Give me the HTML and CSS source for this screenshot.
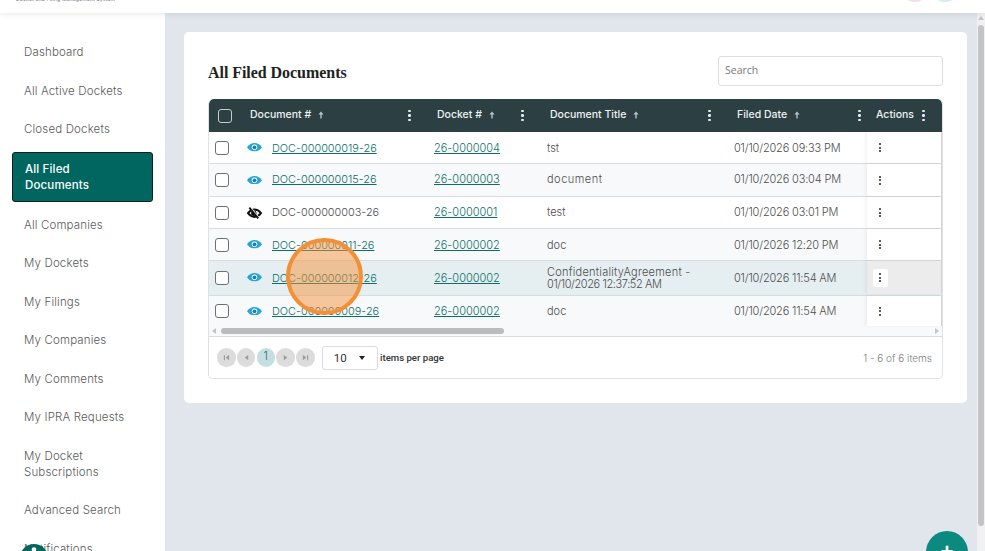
FILE: index.html
```html
<!DOCTYPE html>
<html lang="en">
<head>
<meta charset="utf-8">
<title>All Filed Documents</title>
<link rel="stylesheet" href="styles.css">
</head>
<body>
<svg class="defs" width="0" height="0" aria-hidden="true">
  <symbol id="eye" viewBox="0 0 16 9">
    <path d="M0 4.500C2.400 1.300 5 0 8 0s5.600 1.300 8 4.500C13.600 7.700 11 9 8 9S2.400 7.700 0 4.500z" fill="#25a4d8"/>
    <circle cx="8" cy="4.500" r="2.900" fill="#fff"/>
    <circle cx="8" cy="4.500" r="2" fill="#1b7ea9"/>
  </symbol>
  <symbol id="eye-off" viewBox="0 0 15 12">
    <path d="M1 6.200C2.900 3.600 5 2.500 7.500 2.500S12.100 3.600 14 6.200C12.100 8.800 10 9.900 7.500 9.900S2.900 8.800 1 6.200z" fill="none" stroke="#111" stroke-width="2"/>
    <circle cx="6.800" cy="6.200" r="2.700" fill="#111"/>
    <path d="M3.300 .3l9 10.800" stroke="#fff" stroke-width="1.300"/>
    <path d="M2.300 .6l9 10.800" stroke="#111" stroke-width="1.800"/>
  </symbol>
  <symbol id="up" viewBox="0 0 6 8">
    <path d="M3 .5L5.600 3.500H3.700V7.500H2.300V3.500H.4z"/>
  </symbol>
</svg>
<div class="app">
  <header class="topbar">
    <div class="tagline">Docket and Filing Management System</div>
    <div class="avatars"><span class="av av-pink"></span><span class="av av-teal"></span></div>
  </header>
  <div class="main-row">
    <nav class="sidebar">
      <a class="nav-item">Dashboard</a>
      <a class="nav-item">All Active Dockets</a>
      <a class="nav-item">Closed Dockets</a>
      <a class="nav-item active">All Filed<br>Documents</a>
      <a class="nav-item">All Companies</a>
      <a class="nav-item">My Dockets</a>
      <a class="nav-item">My Filings</a>
      <a class="nav-item">My Companies</a>
      <a class="nav-item">My Comments</a>
      <a class="nav-item">My IPRA Requests</a>
      <a class="nav-item">My Docket<br>Subscriptions</a>
      <a class="nav-item">Advanced Search</a>
      <a class="nav-item">Notifications</a>
    </nav>
    <main class="content">
      <section class="card">
        <div class="card-head">
          <h1>All Filed Documents</h1>
          <input class="search" placeholder="Search">
        </div>
        <div class="grid">
          <div class="row head">
            <div class="c c-check"><span class="cb cb-h"></span></div>
            <div class="c c-doc"><span class="th">Document # <svg class="up"><use href="#up"/></svg></span><span class="kebab"><b></b><b></b><b></b></span></div>
            <div class="c c-dkt"><span class="th">Docket # <svg class="up"><use href="#up"/></svg></span><span class="kebab"><b></b><b></b><b></b></span></div>
            <div class="c c-title"><span class="th">Document Title <svg class="up"><use href="#up"/></svg></span><span class="kebab"><b></b><b></b><b></b></span></div>
            <div class="c c-date"><span class="th">Filed Date <svg class="up"><use href="#up"/></svg></span><span class="kebab"><b></b><b></b><b></b></span></div>
            <div class="c c-act"><span class="th">Actions</span><span class="kebab"><b></b><b></b><b></b></span></div>
          </div>
          <div class="row">
            <div class="c c-check"><span class="cb"></span></div>
            <div class="c c-doc"><svg class="eye"><use href="#eye"/></svg><a class="link docid">DOC-000000019-26</a></div>
            <div class="c c-dkt"><a class="link">26-0000004</a></div>
            <div class="c c-title">tst</div>
            <div class="c c-date">01/10/2026 09:33 PM</div>
            <div class="c c-act"><span class="kebab dark"><b></b><b></b><b></b></span></div>
          </div>
          <div class="row alt tall nudge">
            <div class="c c-check"><span class="cb"></span></div>
            <div class="c c-doc"><svg class="eye"><use href="#eye"/></svg><a class="link docid">DOC-000000015-26</a></div>
            <div class="c c-dkt"><a class="link">26-0000003</a></div>
            <div class="c c-title wide">document</div>
            <div class="c c-date">01/10/2026 03:04 PM</div>
            <div class="c c-act"><span class="kebab dark"><b></b><b></b><b></b></span></div>
          </div>
          <div class="row nudge">
            <div class="c c-check"><span class="cb"></span></div>
            <div class="c c-doc"><svg class="eye eye-off"><use href="#eye-off"/></svg><span class="plain docid">DOC-000000003-26</span></div>
            <div class="c c-dkt"><a class="link">26-0000001</a></div>
            <div class="c c-title">test</div>
            <div class="c c-date">01/10/2026 03:01 PM</div>
            <div class="c c-act"><span class="kebab dark"><b></b><b></b><b></b></span></div>
          </div>
          <div class="row alt">
            <div class="c c-check"><span class="cb"></span></div>
            <div class="c c-doc"><svg class="eye"><use href="#eye"/></svg><a class="link docid">DOC-000000011-26</a></div>
            <div class="c c-dkt"><a class="link">26-0000002</a></div>
            <div class="c c-title">doc</div>
            <div class="c c-date">01/10/2026 12:20 PM</div>
            <div class="c c-act"><span class="kebab dark"><b></b><b></b><b></b></span></div>
          </div>
          <div class="row hover">
            <div class="c c-check"><span class="cb"></span></div>
            <div class="c c-doc"><svg class="eye"><use href="#eye"/></svg><a class="link docid">DOC-000000012-26</a></div>
            <div class="c c-dkt"><a class="link">26-0000002</a></div>
            <div class="c c-title two"><span>ConfidentialityAgreement -<br><span class="tight">01/10/2026 12:37:52 AM</span></span></div>
            <div class="c c-date">01/10/2026 11:54 AM</div>
            <div class="c c-act"><span class="kebab dark boxed"><b></b><b></b><b></b></span></div>
          </div>
          <div class="row alt last">
            <div class="c c-check"><span class="cb"></span></div>
            <div class="c c-doc"><svg class="eye"><use href="#eye"/></svg><a class="link docid">DOC-000000009-26</a></div>
            <div class="c c-dkt"><a class="link">26-0000002</a></div>
            <div class="c c-title">doc</div>
            <div class="c c-date">01/10/2026 11:54 AM</div>
            <div class="c c-act"><span class="kebab dark"><b></b><b></b><b></b></span></div>
          </div>
          <div class="hscroll">
            <span class="arr arr-l"></span>
            <span class="hthumb"></span>
            <span class="arr arr-r"></span>
          </div>
          <div class="pager">
            <span class="pg"><svg viewBox="0 0 8 8"><path d="M1 1h1.200v6H1zM7 1v6L3 4z"/></svg></span>
            <span class="pg"><svg viewBox="0 0 8 8"><path d="M6 1v6L2 4z"/></svg></span>
            <span class="pg cur">1</span>
            <span class="pg"><svg viewBox="0 0 8 8"><path d="M2 1v6l4-3z"/></svg></span>
            <span class="pg"><svg viewBox="0 0 8 8"><path d="M1 1v6l4-3zM5.800 1H7v6H5.800z"/></svg></span>
            <span class="size">10<i class="caret"></i></span>
            <span class="ipp">items per page</span>
            <span class="count">1 - 6 of 6 items</span>
          </div>
        </div>
      </section>
    </main>
  </div>
  <div class="vscroll"><span class="vup"></span><span class="vthumb"></span></div>
  <span class="click-dot"></span>
  <span class="help"><svg viewBox="0 0 30 30"><circle cx="15" cy="15" r="15" fill="#00665f"/><circle cx="15" cy="6" r="2.500" fill="#fff"/></svg></span>
  <span class="fab">+</span>
</div>
</body>
</html>
```
FILE: styles.css
```css
* { box-sizing: border-box; }
html, body { margin: 0; height: 100%; overflow: hidden; }
body { font-family: "Inter", "Open Sans", sans-serif; color: #4d4d4d; background: #e1e6ed; }
.defs { position: absolute; }
.app { position: relative; width: 985px; height: 551px; overflow: hidden; display: flex; flex-direction: column; }
.topbar { height: 13px; flex: none; background: #fff; display: flex; justify-content: space-between; align-items: flex-start; box-shadow: 0 1px 6px rgba(0,0,0,.1); position: relative; z-index: 2; padding: 0 26px 0 16px; }
.tagline { font-size: 5px; line-height: 5px; color: #667; width: 100px; height: 5px; overflow: hidden; white-space: nowrap; letter-spacing: .2px; margin-top: -3px; }
.avatars { display: flex; gap: 2px; height: 2px; overflow: hidden; }
.av { width: 28px; height: 28px; border-radius: 50%; margin-top: -26px; }
.av-pink { background: #f0dfe6; }
.av-teal { background: #d6ecec; }
.main-row { flex: 1; display: flex; min-height: 0; }
.sidebar { width: 165px; flex: none; background: #fff; padding: 19px 12px 0; display: flex; flex-direction: column; }
.nav-item { display: block; font-size: 11.500px; line-height: 16px; color: #5a5a5a; padding: 12px 12px 10.500px; letter-spacing: .15px; font-weight: 300; flex: none; }
.nav-item.active { background: #00665f; color: #fff; font-weight: 500; border: 1px solid #0b1f1d; border-radius: 3px; padding: 8px 12px; margin: 4px 0 3px; width: 141px; height: 50px; }
.content { flex: 1; padding: 19px 18px 0 19px; min-width: 0; }
.card { background: #fff; border-radius: 5px; width: 783px; height: 371px; padding: 24px 24px 0; }
.card-head { display: flex; justify-content: space-between; align-items: flex-start; height: 43px; }
.card-head h1 { margin: 8px 0 0; font: 700 16px/18px "Liberation Serif", serif; color: #222; letter-spacing: -.05px; }
.search { width: 225px; height: 30px; border: 1px solid #dcdfe2; border-radius: 3px; padding: 0 6px 2px; font: 10.500px "Open Sans", sans-serif; outline: none; }
.search::placeholder { color: #777; opacity: 1; }
.grid { width: 735px; height: 280px; border: 1px solid #dfe2e5; border-top: 0; border-radius: 5px; position: relative; overflow: hidden; }
.row { display: flex; height: 32px; border-bottom: 1px solid #d8dcdf; font-size: 11px; background: #fff; align-items: stretch; font-weight: 300; }
.row.tall { height: 33px; }
.row.alt { background: #f7f9fa; }
.row.hover { background: #e5eef1; height: 35px; padding-bottom: 1px; }
.row.last { border-bottom: 0; padding-bottom: 2px; }
.row.head { background: #2c4044; height: 33px; color: #eef1f1; border: 0; border-radius: 5px 5px 0 0; font-size: 10.500px; font-weight: 500; }
.c { display: flex; align-items: center; }
.c-check { width: 38px; padding-left: 6px; }
.row.head .c-check { padding-left: 9px; }
.c-doc { width: 187px; }
.c-dkt { width: 113px; }
.c-title { width: 187px; }
.c-date { width: 133px; letter-spacing: -.17px; }
.c-act { flex: 1; background: #fff; padding-left: 12px; box-shadow: -2px 0 3px rgba(0,0,0,.05), inset -1px 0 0 #d4d4d4; }
.nudge .docid, .nudge .c-dkt, .nudge .c-title, .nudge .c-date { padding-bottom: 2px; }
.wide { letter-spacing: .5px; }
.th { display: flex; align-items: center; gap: 3px; white-space: pre; padding-bottom: 2px; }
.row.head .c-doc { justify-content: space-between; padding: 0 23px 0 3px; }
.row.head .c-dkt { justify-content: space-between; padding: 0 23px 0 3px; }
.row.head .c-title { justify-content: space-between; padding: 0 23px 0 3px; }
.row.head .c-date { justify-content: space-between; padding: 0 6px 0 3px; letter-spacing: 0; }
.row.head .c-act { background: transparent; box-shadow: none; justify-content: space-between; padding: 0 17px 0 9px; }
.row.hover .c-act { background: #ececec; }
.cb { display: block; width: 14px; height: 14px; border: 1px solid #6b7073; border-radius: 3px; background: #fff; }
.cb-h { background: transparent; border-color: #c7cdce; }
.eye { width: 15px; height: 8.500px; margin-right: 10px; flex: none; }
.eye-off { height: 12px; }
.link { color: #0b6f68; text-decoration: underline; }
.docid { font-size: 10.900px; }
.plain { color: #4d4d4d; }
.up { width: 6px; height: 8px; fill: #b9c3c3; margin-left: 1px; }
.kebab { display: flex; flex-direction: column; gap: 2px; width: 3px; }
.kebab b { display: block; width: 2.500px; height: 2.500px; border-radius: 50%; background: #e8ecec; }
.kebab.dark { gap: 1.500px; }
.kebab.dark b { background: #222; width: 2px; height: 2px; }
.kebab.boxed { box-sizing: content-box; background: #fff; padding: 3px 6px; margin-left: -6px; border-radius: 2px; height: 12px; justify-content: center; }
.two { line-height: 12px; font-size: 11px; letter-spacing: .25px; }
.tight { letter-spacing: -.4px; }
.hscroll { height: 8px; position: relative; background: #f7f9fa; }
.hthumb { position: absolute; left: 12px; top: 0; width: 283px; height: 6px; background: #bcbcbc; border-radius: 3px; }
.arr { position: absolute; top: 0; width: 0; height: 0; border-top: 3px solid transparent; border-bottom: 3px solid transparent; }
.arr-l { left: 3px; border-right: 4px solid #c4c4c4; }
.arr-r { right: 3px; border-left: 4px solid #c4c4c4; }
.pager { border-top: 1px solid #d8dcdf; height: 42px; display: flex; align-items: center; padding: 0 10px 0 8px; gap: 1.250px; }
.pg { width: 18.500px; height: 18.500px; border-radius: 50%; background: #dcdcdc; display: flex; align-items: center; justify-content: center; font-size: 11px; font-weight: 300; color: #1f6a6d; flex: none; }
.pg svg { width: 7px; height: 7px; fill: #9b9b9b; }
.pg.cur { background: #c5dfe1; padding-bottom: 3px; }
.size { width: 56px; height: 24px; border: 1px solid #d8dcdf; border-radius: 3px; margin-left: 6px; display: flex; align-items: center; justify-content: space-between; padding: 0 12px 0 11px; font: 11.500px "Roboto", sans-serif; color: #333; }
.caret { width: 0; height: 0; border-left: 3.500px solid transparent; border-right: 3.500px solid transparent; border-top: 4px solid #222; }
.ipp { font: 500 9.600px "Roboto", sans-serif; color: #333; margin-left: 1px; }
.count { margin-left: auto; font-size: 10px; font-weight: 300; color: #7d7d7d; }
.vscroll { position: absolute; right: 0; top: 13px; bottom: 0; width: 8px; background: #f1f1f1; }
.vup { position: absolute; top: 3px; left: 1px; border-left: 3px solid transparent; border-right: 3px solid transparent; border-bottom: 4px solid #c4c4c4; }
.vthumb { position: absolute; top: 12px; left: 1px; width: 6px; height: 501px; background: #c4c4c4; border-radius: 3px; }
.click-dot { position: absolute; left: 286px; top: 238px; width: 77px; height: 77px; border-radius: 50%; background: rgba(246,145,60,.5); border: 4px solid #f38f36; }
.help { position: absolute; left: 20px; top: 544px; width: 28px; height: 28px; }
.help svg { display: block; width: 28px; height: 28px; }
.fab { position: absolute; left: 926px; top: 531px; width: 42px; height: 42px; border-radius: 50%; background: #0d8a80; color: #fff; text-align: center; font: 700 22px/42px "Liberation Sans", sans-serif; }
```
